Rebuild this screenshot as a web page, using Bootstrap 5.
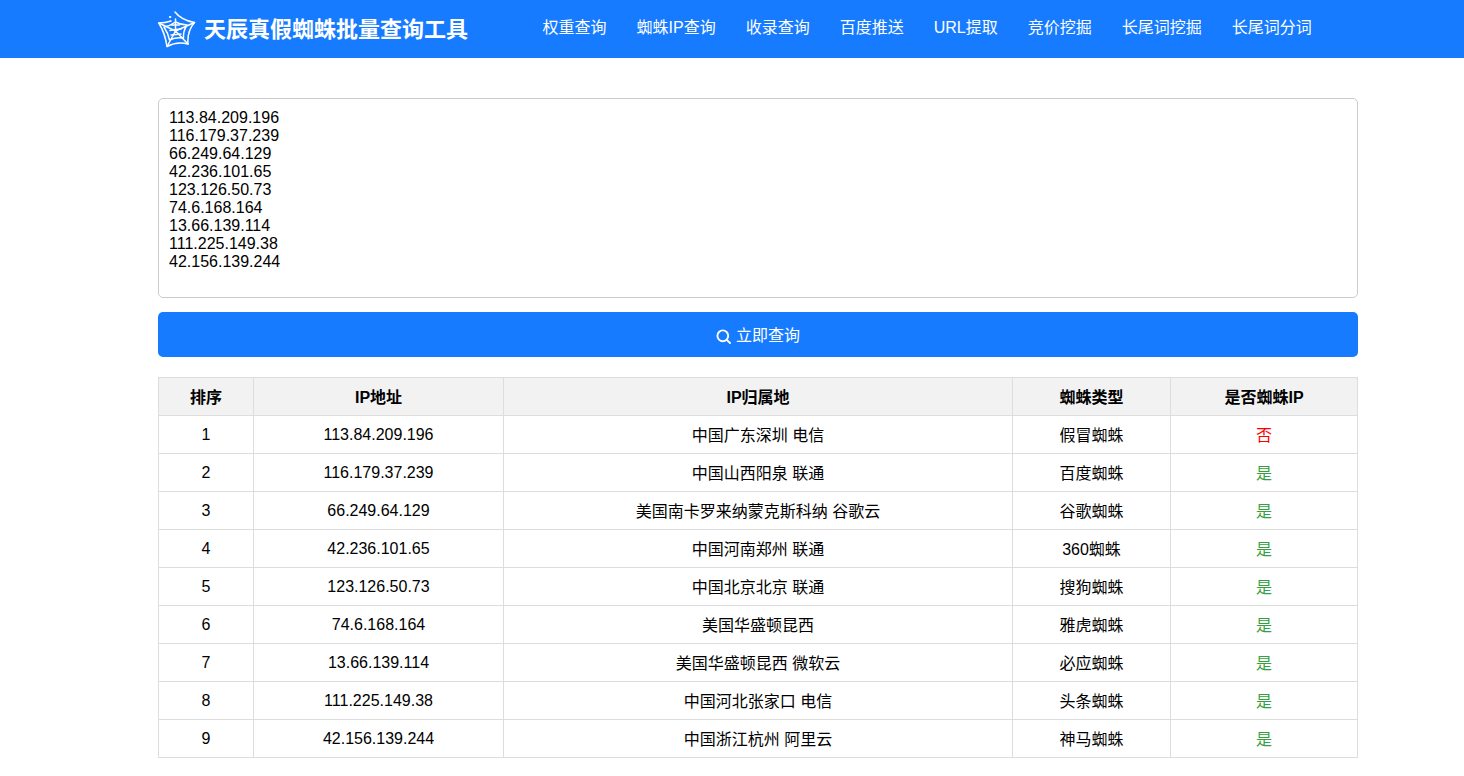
<!DOCTYPE html>
<html lang="zh">
<head>
<meta charset="utf-8">
<title>天辰真假蜘蛛批量查询工具</title>
<link href="https://cdn.jsdelivr.net/npm/bootstrap@5.3.0/dist/css/bootstrap.min.css" rel="stylesheet">
<style>
html, body { overflow: hidden; height: 776px; }
body { font-family: "Liberation Sans", "Noto Sans CJK SC", sans-serif; font-size: 16px; color: #000; background: #fff; }
.topbar { background: #167bff; height: 58px; }
.wrap-main { width: 1200px; margin-left: 158px; }
.brand-box { color: #fff; font-size: 22px; font-weight: 700; gap: 8px; text-decoration: none; width: 345.5px; }
.brand-box:hover { color: #fff; }
.menu-link { color: #fff; font-size: 16px; padding: 0 15px 2px; line-height: 54px; white-space: nowrap; text-decoration: none; }
.menu-link:hover { color: #fff; }
.ip-input { height: 200px; margin-top: 40px; padding: 10px; font-size: 16px; line-height: 18px; border: 1px solid #ccc; border-radius: 5px; color: #000; resize: none; font-family: "Liberation Sans", "Noto Sans CJK SC", sans-serif; }
.go-btn { background: #167bff; border: 0; color: #fff; height: 45px; margin-top: 14px; font-size: 16px; border-radius: 5px; gap: 5px; }
.go-btn:hover { background: #167bff; color: #fff; }
.go-btn span { padding-top: 2px; }
.go-btn svg { margin-top: 3px; }
.ip-table { margin-top: 20px; width: 1199px; table-layout: fixed; border-collapse: collapse; text-align: center; }
.ip-table th, .ip-table td { border: 1px solid #ddd; height: 38px; padding: 0 8px; vertical-align: middle; font-size: 16px; line-height: 18px; color: #000; box-shadow: none; }
.ip-table th { background: #f2f2f2; font-weight: 700; }
.ip-table td.no { color: #f00; }
.ip-table td.yes { color: #35a03f; }
.cjk-cell { padding-top: 2px !important; }
.col-a { width: 95px; }
.col-b { width: 250px; }
.col-c { width: 509px; }
.col-d { width: 158px; }
.col-e { width: 187px; }
</style>
</head>
<body>
<nav class="topbar">
  <div class="wrap-main d-flex align-items-center h-100">
    <a class="brand-box d-flex align-items-center" href="#">
      <svg width="38" height="37" viewBox="0 0 38 37" fill="none" stroke="#fff" stroke-width="1.5" stroke-linejoin="round" stroke-linecap="round">
        <path d="M13 10 Q7 12 .8 12 Q7 22 9 35.5 Q19 30 30 33 Q29 20 36.5 11.5 Q23 9 17 1"/>
        <path d="M6 16 Q12 15 17.5 11 Q23 14 29 14 Q25 20 25.5 27 Q18 26 11.5 29 Q10 22 6 16Z"/>
        <path d="M12 19.5 Q18 18 23 18 M13 24 L23 23"/>
        <path d="M.8 12 L17.5 20 M36.5 11.5 L17.5 20 M30 33 L17.5 20 M9 35.5 L17.5 20 M17.5 8 L17.5 20 M13.5 14 L21.5 14"/>
        <circle cx="12" cy="6" r=".7" fill="#fff" stroke-width="1"/>
      </svg>
      <span>天辰真假蜘蛛批量查询工具</span>
    </a>
    <div class="d-flex ms-4">
      <a class="menu-link" href="#">权重查询</a>
      <a class="menu-link" href="#">蜘蛛IP查询</a>
      <a class="menu-link" href="#">收录查询</a>
      <a class="menu-link" href="#">百度推送</a>
      <a class="menu-link" href="#">URL提取</a>
      <a class="menu-link" href="#">竞价挖掘</a>
      <a class="menu-link" href="#">长尾词挖掘</a>
      <a class="menu-link" href="#">长尾词分词</a>
    </div>
  </div>
</nav>
<main class="wrap-main">
  <textarea class="ip-input form-control d-block w-100" aria-label="IP">113.84.209.196
116.179.37.239
66.249.64.129
42.236.101.65
123.126.50.73
74.6.168.164
13.66.139.114
111.225.149.38
42.156.139.244</textarea>
  <button type="button" class="go-btn btn w-100 d-flex align-items-center justify-content-center">
    <svg width="15" height="15" viewBox="0 0 15 15" fill="none" stroke="#fff" stroke-width="1.9" stroke-linecap="round"><circle cx="6.8" cy="6.8" r="5.4"/><path d="M10.8 10.8 L14 14"/></svg>
    <span>立即查询</span>
  </button>
  <table class="ip-table table mb-0">
    <colgroup>
      <col class="col-a"><col class="col-b"><col class="col-c"><col class="col-d"><col class="col-e">
    </colgroup>
    <thead>
      <tr><th class="cjk-cell">排序</th><th class="cjk-cell">IP地址</th><th class="cjk-cell">IP归属地</th><th class="cjk-cell">蜘蛛类型</th><th class="cjk-cell">是否蜘蛛IP</th></tr>
    </thead>
    <tbody>
      <tr><td>1</td><td>113.84.209.196</td><td class="cjk-cell">中国广东深圳 电信</td><td class="cjk-cell">假冒蜘蛛</td><td class="no cjk-cell">否</td></tr>
      <tr><td>2</td><td>116.179.37.239</td><td class="cjk-cell">中国山西阳泉 联通</td><td class="cjk-cell">百度蜘蛛</td><td class="yes cjk-cell">是</td></tr>
      <tr><td>3</td><td>66.249.64.129</td><td class="cjk-cell">美国南卡罗来纳蒙克斯科纳 谷歌云</td><td class="cjk-cell">谷歌蜘蛛</td><td class="yes cjk-cell">是</td></tr>
      <tr><td>4</td><td>42.236.101.65</td><td class="cjk-cell">中国河南郑州 联通</td><td class="cjk-cell">360蜘蛛</td><td class="yes cjk-cell">是</td></tr>
      <tr><td>5</td><td>123.126.50.73</td><td class="cjk-cell">中国北京北京 联通</td><td class="cjk-cell">搜狗蜘蛛</td><td class="yes cjk-cell">是</td></tr>
      <tr><td>6</td><td>74.6.168.164</td><td class="cjk-cell">美国华盛顿昆西</td><td class="cjk-cell">雅虎蜘蛛</td><td class="yes cjk-cell">是</td></tr>
      <tr><td>7</td><td>13.66.139.114</td><td class="cjk-cell">美国华盛顿昆西 微软云</td><td class="cjk-cell">必应蜘蛛</td><td class="yes cjk-cell">是</td></tr>
      <tr><td>8</td><td>111.225.149.38</td><td class="cjk-cell">中国河北张家口 电信</td><td class="cjk-cell">头条蜘蛛</td><td class="yes cjk-cell">是</td></tr>
      <tr><td>9</td><td>42.156.139.244</td><td class="cjk-cell">中国浙江杭州 阿里云</td><td class="cjk-cell">神马蜘蛛</td><td class="yes cjk-cell">是</td></tr>
    </tbody>
  </table>
</main>
<script src="https://cdn.jsdelivr.net/npm/bootstrap@5.3.0/dist/js/bootstrap.bundle.min.js"></script>
</body>
</html>
